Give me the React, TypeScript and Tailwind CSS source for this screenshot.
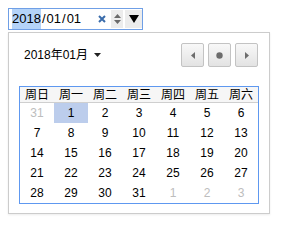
const WEEKDAYS = ["周日", "周一", "周二", "周三", "周四", "周五", "周六"];

type Day = { n: number; other?: boolean; selected?: boolean };

const WEEKS: Day[][] = [
  [{ n: 31, other: true }, { n: 1, selected: true }, { n: 2 }, { n: 3 }, { n: 4 }, { n: 5 }, { n: 6 }],
  [{ n: 7 }, { n: 8 }, { n: 9 }, { n: 10 }, { n: 11 }, { n: 12 }, { n: 13 }],
  [{ n: 14 }, { n: 15 }, { n: 16 }, { n: 17 }, { n: 18 }, { n: 19 }, { n: 20 }],
  [{ n: 21 }, { n: 22 }, { n: 23 }, { n: 24 }, { n: 25 }, { n: 26 }, { n: 27 }],
  [{ n: 28 }, { n: 29 }, { n: 30 }, { n: 31 }, { n: 1, other: true }, { n: 2, other: true }, { n: 3, other: true }],
];

function NavButton({ children }: { children: React.ReactNode }) {
  return (
    <button className="flex h-[24px] w-[23px] items-center justify-center rounded-[2px] border border-[#c3c3c3] bg-gradient-to-b from-[#f8f8f8] to-[#e3e3e3]">
      {children}
    </button>
  );
}

function DateInput() {
  return (
    <div className="flex h-[22px] w-[135px] items-center border border-[#6f9fe6] bg-white pl-[3px] text-[13px] text-black">
      <span className="bg-[#b4d3f8]">2018</span>
      <span className="px-[1px]">/</span>
      <span>01</span>
      <span className="px-[1px]">/</span>
      <span>01</span>
      <span className="ml-auto flex h-full items-center">
        <svg width="8" height="8" viewBox="0 0 8 8" className="mr-[5px]">
          <path d="M1 1L7 7M7 1L1 7" stroke="#3a6cab" strokeWidth="2" />
        </svg>
        <span className="flex h-[18px] w-[12px] flex-col items-center justify-center gap-[2px] bg-[#ececec]">
          <svg width="7" height="4" viewBox="0 0 7 4">
            <path d="M0 4L3.5 0L7 4Z" fill="#6a6a6a" />
          </svg>
          <svg width="7" height="4" viewBox="0 0 7 4">
            <path d="M0 0L3.5 4L7 0Z" fill="#6a6a6a" />
          </svg>
        </span>
        <span className="ml-[2px] flex h-[18px] w-[17px] items-center justify-center bg-[#ececec]">
          <svg width="10" height="8" viewBox="0 0 10 8">
            <path d="M0 0H10L5 8Z" fill="#000" />
          </svg>
        </span>
      </span>
    </div>
  );
}

export default function App() {
  return (
    <div
      className="h-[226px] w-[281px] bg-white pl-[8px] pt-[8px]"
      style={{ fontFamily: '"Liberation Sans", Arial, "Noto Sans CJK SC", sans-serif' }}
    >
      <DateInput />
      <div className="mt-[2px] flex h-[182px] w-[262px] flex-col border border-[#cccccc] bg-white p-[10px] shadow-[0_1px_2px_rgba(0,0,0,0.08)]">
        <div className="flex h-[24px] items-center">
          <span className="ml-[5px] flex items-center text-[12px] text-black">
            2018年01月
            <svg width="7" height="4" viewBox="0 0 7 4" className="ml-[6px]">
              <path d="M0 0H7L3.5 4Z" fill="#222" />
            </svg>
          </span>
          <div className="ml-auto mr-[1px] flex gap-[4px]">
            <NavButton>
              <svg width="4" height="7" viewBox="0 0 4 7">
                <path d="M4 0V7L0 3.5Z" fill="#6c6c6c" />
              </svg>
            </NavButton>
            <NavButton>
              <svg width="7" height="7" viewBox="0 0 7 7">
                <circle cx="3.5" cy="3.5" r="3.2" fill="#6c6c6c" />
              </svg>
            </NavButton>
            <NavButton>
              <svg width="4" height="7" viewBox="0 0 4 7">
                <path d="M0 0V7L4 3.5Z" fill="#6c6c6c" />
              </svg>
            </NavButton>
          </div>
        </div>
        <div className="mt-[19px] border border-[#5e98f0] text-[12px]">
          <div className="grid h-[16px] grid-cols-7 items-center border-b border-[#cfcfcf] bg-[#f6f6f6] text-black">
            {WEEKDAYS.map((d) => (
              <span key={d} className="text-center leading-none">
                {d}
              </span>
            ))}
          </div>
          {WEEKS.map((week, i) => (
            <div key={i} className="grid h-[20px] grid-cols-7">
              {week.map((day, j) => (
                <span
                  key={j}
                  className={`flex items-center justify-center ${day.other ? "text-[#bdbdbd]" : "text-black"} ${day.selected ? "bg-[#bccdec]" : ""}`}
                >
                  {day.n}
                </span>
              ))}
            </div>
          ))}
        </div>
      </div>
    </div>
  );
}
